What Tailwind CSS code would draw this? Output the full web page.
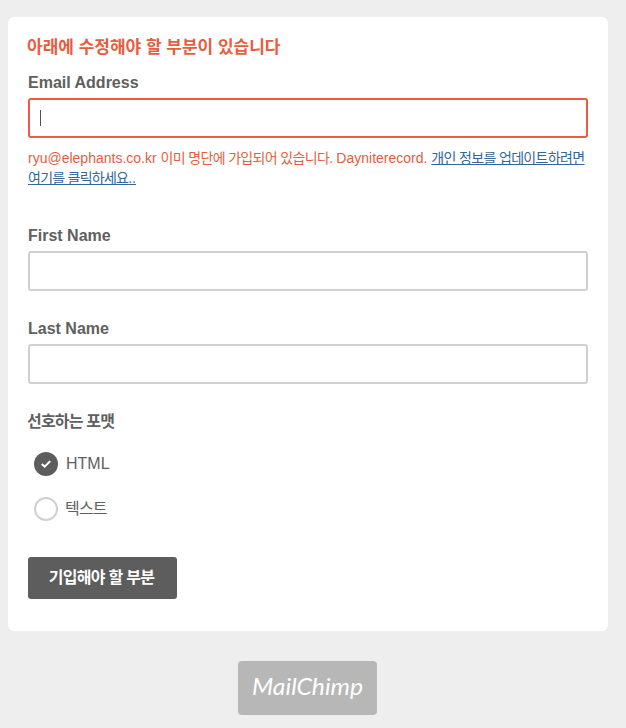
<!DOCTYPE html>
<html lang="ko">
<head>
  <meta charset="UTF-8" />
  <meta name="viewport" content="width=device-width, initial-scale=1.0"/>
  <title>Dayniterecord</title>
  <script src="https://cdn.jsdelivr.net/npm/@tailwindcss/browser@4"></script>
</head>
<body class="bg-[#eeeeee] text-[#606060] min-h-screen pt-[17px] pl-2 overflow-hidden font-['Liberation_Sans','Noto_Sans_CJK_KR',sans-serif]">
  <form class="w-[600px] h-[614px] bg-white rounded-md px-5 pt-[21px]">
    <h1 class="h-5 leading-5 text-[17px] font-bold text-[#e85c41] whitespace-nowrap -ml-px">아래에 수정해야 할 부분이 있습니다</h1>

    <label for="email" class="block mt-[15px] h-5 leading-5 text-base font-bold">Email Address</label>
    <div class="mt-[5px] h-10 border-2 border-[#e85c41] rounded-[3px] flex items-center pl-2.5">
      <span class="w-px h-4 bg-[#505050]"></span>
      <input id="email" type="text" class="w-full outline-none"/>
    </div>
    <div class="mt-2.5 h-10 text-sm leading-5 text-[#e85c41] whitespace-nowrap">
      <p>ryu@elephants.co.kr <span class="tracking-[-0.65px]">이미 명단에 가입되어 있습니다.</span> Dayniterecord. <a href="#" class="text-[#336699] underline tracking-[-0.65px]">개인 정보를 업데이트하려면</a></p>
      <p><a href="#" class="text-[#336699] underline"><span class="tracking-[-0.75px]">여기를 클릭하세요</span>..</a></p>
    </div>

    <label for="fname" class="block mt-[38px] h-5 leading-5 text-base font-bold">First Name</label>
    <input id="fname" type="text" class="block mt-[5px] w-full h-10 border-2 border-[#d0d0d0] rounded-[3px] px-2.5"/>

    <label for="lname" class="block mt-7 h-5 leading-5 text-base font-bold">Last Name</label>
    <input id="lname" type="text" class="block mt-[5px] w-full h-10 border-2 border-[#d0d0d0] rounded-[3px] px-2.5"/>

    <p class="mt-7 h-5 leading-5 text-base font-bold tracking-[-0.8px] -ml-px">선호하는 포맷</p>
    <div class="mt-5 pl-1.5 flex flex-col gap-[21px]">
      <label class="flex items-center gap-2 h-6 text-base">
        <span class="w-6 h-6 rounded-full bg-[#5d5d5d] flex items-center justify-center">
          <svg class="w-3 h-3" viewBox="0 0 12 12" fill="none" stroke="#fff" stroke-width="2"><path d="M1.8 6L4.7 8.7L10.2 3.1"/></svg>
        </span>
        HTML
      </label>
      <label class="flex items-center gap-2 h-6 text-base">
        <span class="w-6 h-6 rounded-full border-2 border-[#d0d0d0]"></span>
        <span class="tracking-[-0.8px] -ml-px">텍스트</span>
      </label>
    </div>

    <button type="button" class="block mt-9 w-[149px] h-[42px] pr-0.5 bg-[#5d5d5d] rounded-[3px] text-white text-base font-bold tracking-[-0.7px] whitespace-nowrap">기입해야 할 부분</button>
  </form>

  <a href="#" class="block mt-[30px] ml-[230px] w-[139px] h-[54px] bg-[#b7b7b7] rounded">
    <svg class="w-full h-full" viewBox="0 0 139 54">
      <text x="14" y="34" textLength="111" lengthAdjust="spacingAndGlyphs" fill="#fff" class="font-['Snell_Roundhand','Lato',cursive] italic text-2xl">MailChimp</text>
    </svg>
  </a>
</body>
</html>
